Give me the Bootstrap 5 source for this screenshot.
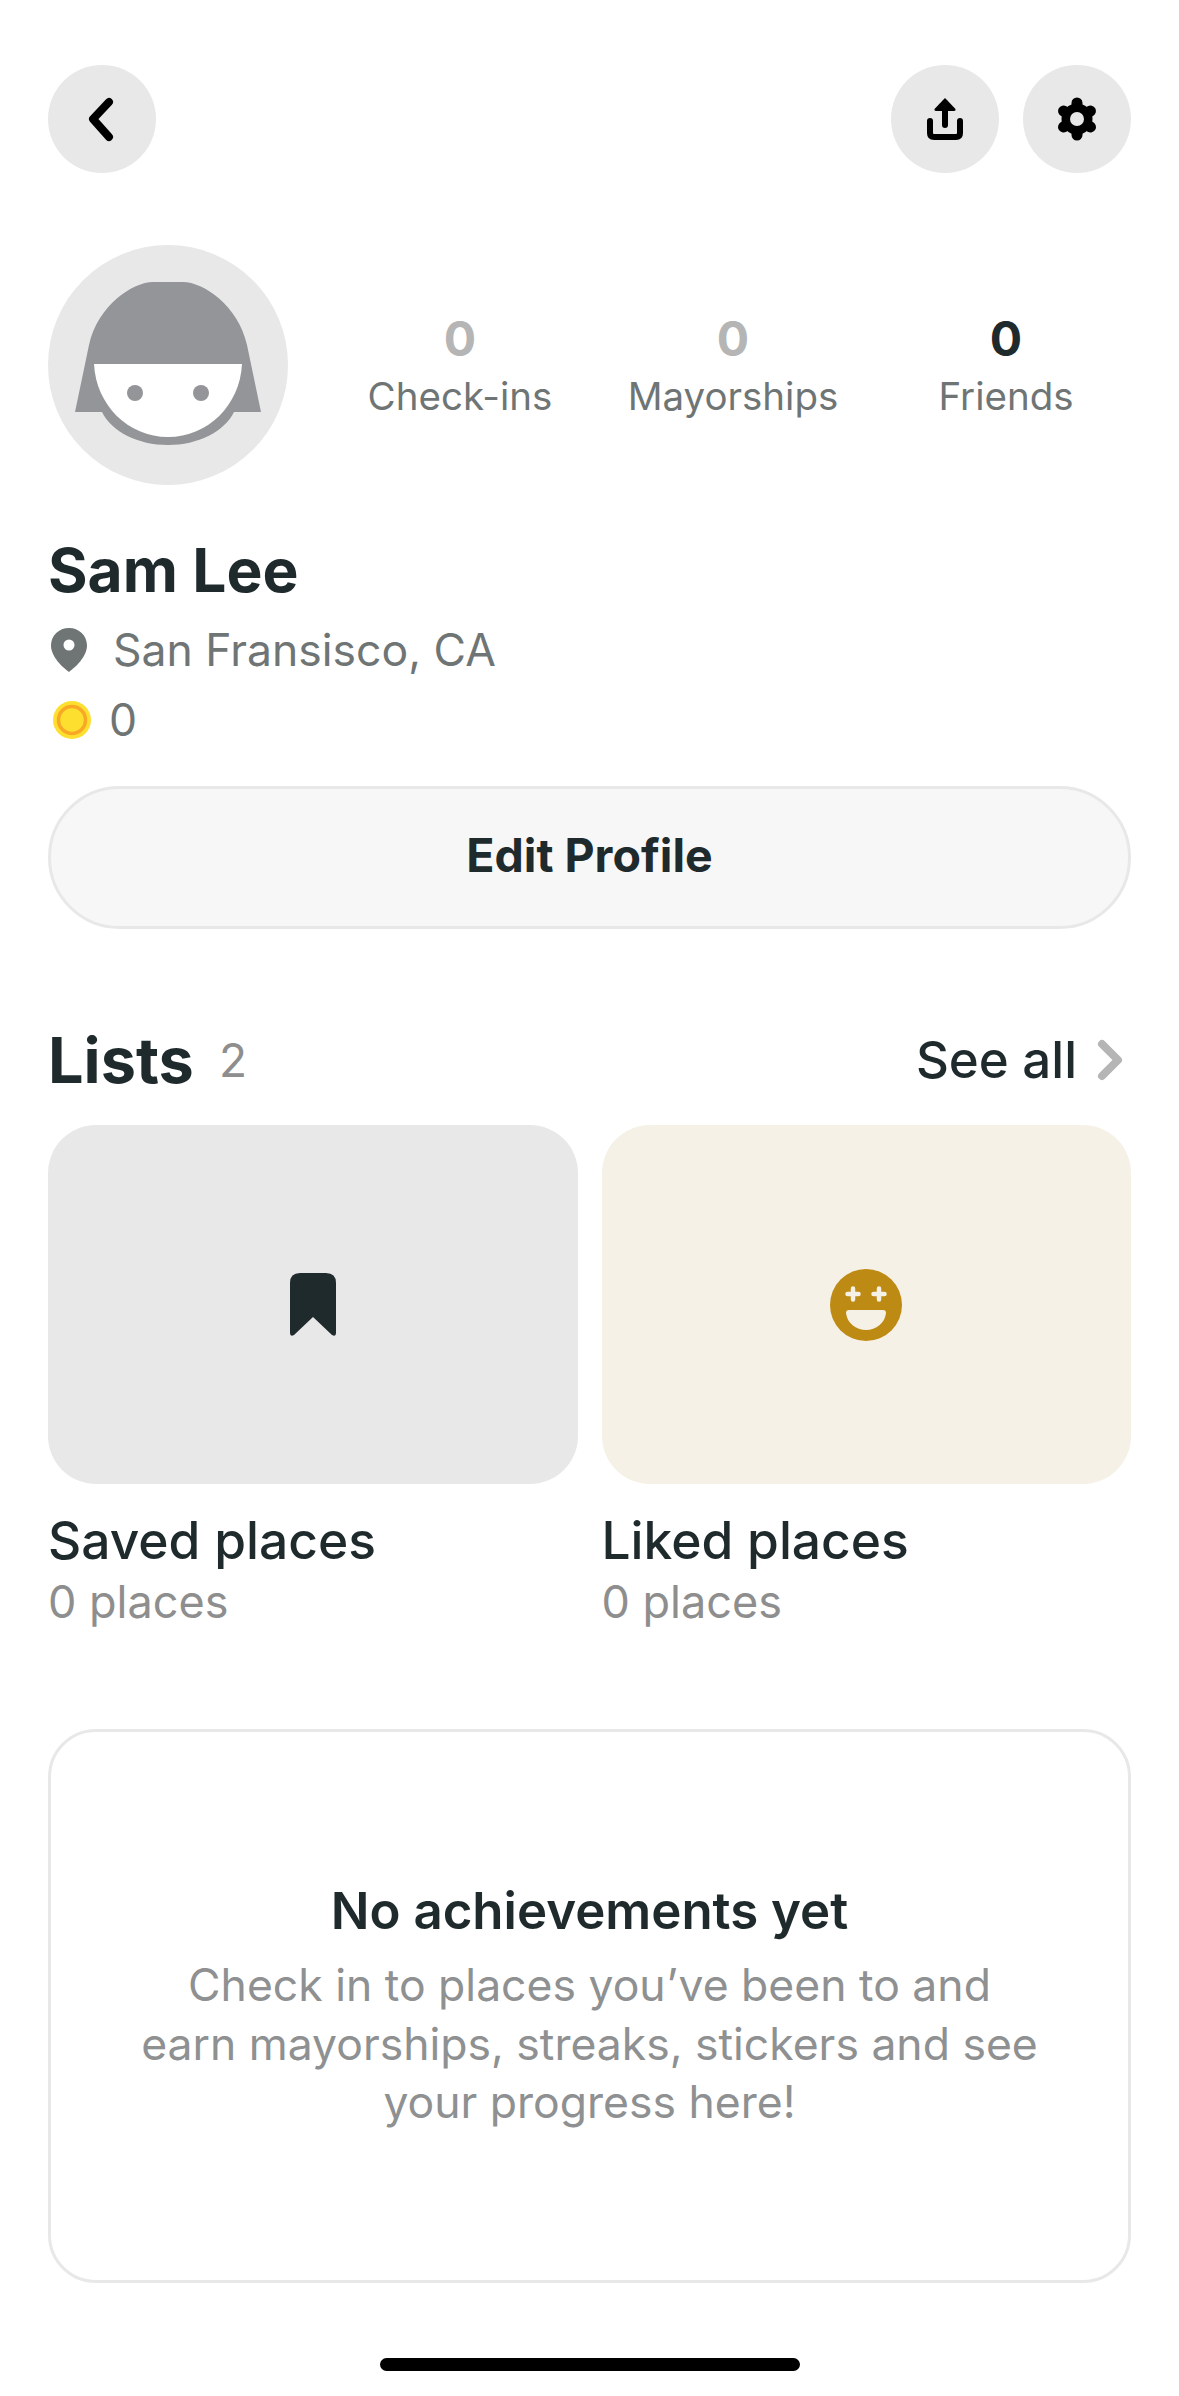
<!DOCTYPE html>
<html lang="en">
<head>
  <meta charset="UTF-8">
  <meta name="viewport" content="width=device-width, initial-scale=1">
  <title>Profile</title>
  <link href="https://cdn.jsdelivr.net/npm/bootstrap@5.3.0/dist/css/bootstrap.min.css" rel="stylesheet">
  <style>
    body {
      font-family: Inter, "Liberation Sans", sans-serif;
      background-color: #fff;
      color: #1f2a2c;
    }
    .screen {
      height: 2396px;
      overflow: hidden;
      padding: 65px 48px 0;
    }
    .circle-btn {
      width: 108px;
      height: 108px;
      padding: 0;
      border: 0;
      background-color: #e8e8e8;
    }
    .top-right { gap: 24px; }
    .profile-top { margin-top: 72px; }
    .avatar-pic { width: 240px; height: 240px; flex: none; }
    .stats-row { margin: 6px -11.5px 0 35.5px; }
    .stat-item { width: 273px; text-align: center; }
    .stat-num { font-size: 48px; font-weight: 700; line-height: 56px; color: #b5b5b5; }
    .stat-num.is-on { color: #1f2a2c; }
    .stat-label { font-size: 38.5px; line-height: 58px; color: #6f7575; }
    .user-name { font-size: 60.5px; font-weight: 700; line-height: 72px; margin: 49px 0 0; }
    .info-line { font-size: 44.5px; line-height: 70px; color: #6f7575; }
    .pin-line { margin-top: 9px; gap: 26px; padding-left: 3px; }
    .coin-line { margin-top: 0; gap: 18px; padding-left: 5px; }
    .edit-btn {
      display: block;
      width: 100%;
      height: 143px;
      margin-top: 31px;
      padding-bottom: 10px;
      border: 3px solid #e8e8e8;
      background-color: #f7f7f7;
      color: #1f2a2c;
      font-size: 46.5px;
      font-weight: 700;
    }
    .lists-head { margin-top: 96px; height: 70px; }
    .lists-title { font-size: 63px; font-weight: 700; }
    .lists-count { font-size: 46px; color: #8e8e8e; margin-left: 25px; }
    .see-all { font-size: 51px; font-weight: 500; color: #1f2a2c; gap: 20px; margin-right: 8px; }
    .lists-row { margin-top: 30px; --bs-gutter-x: 24px; }
    .list-tile { height: 359px; border-radius: 48px; }
    .tile-saved { background-color: #e8e8e8; }
    .tile-liked { background-color: #f6f1e6; }
    .list-name { font-size: 51.5px; font-weight: 500; line-height: 62px; margin-top: 25px; }
    .list-count { font-size: 45px; line-height: 62px; color: #8e8e8e; }
    .achieve-box {
      height: 554px;
      margin-top: 96px;
      border: 3px solid #e8e8e8;
      border-radius: 48px;
    }
    .achieve-title { font-size: 51px; font-weight: 600; line-height: 62px; margin: 0 0 14px; }
    .achieve-text { font-size: 44.5px; line-height: 58.5px; color: #8e9091; margin: 0; }
    .home-bar { width: 420px; height: 13px; background-color: #000; margin: 75px auto 0; }
  </style>
</head>
<body>
  <div class="screen">
    <div class="d-flex justify-content-between">
      <button class="btn circle-btn rounded-circle d-flex align-items-center justify-content-center" aria-label="Back">
        <svg width="108" height="108" viewBox="0 0 108 108"><path d="M61 37 L45 54 L61 72" fill="none" stroke="#000" stroke-width="8" stroke-linecap="round" stroke-linejoin="round"/></svg>
      </button>
      <div class="d-flex top-right">
        <button class="btn circle-btn rounded-circle d-flex align-items-center justify-content-center" aria-label="Share">
          <svg width="108" height="108" viewBox="0 0 108 108"><path d="M39 56 V68 Q39 72 43 72 H65 Q69 72 69 68 V56" fill="none" stroke="#000" stroke-width="6" stroke-linecap="round"/><path d="M54 60 V38" fill="none" stroke="#000" stroke-width="6" stroke-linecap="round"/><path d="M54 33 L64.500 44 Q65 46 63 46 H45 Q43 46 43.500 44 Z" fill="#000"/></svg>
        </button>
        <button class="btn circle-btn rounded-circle d-flex align-items-center justify-content-center" aria-label="Settings">
          <svg width="108" height="108" viewBox="0 0 108 108">
            <circle cx="54" cy="54" r="15.500" fill="#000"/>
            <path d="M54 54 V38 M54 54 V70 M54 54 L67.500 46 M54 54 L40.500 62 M54 54 L67.500 62 M54 54 L40.500 46" stroke="#000" stroke-width="11" stroke-linecap="round"/>
            <circle cx="54" cy="54" r="7" fill="#e8e8e8"/>
          </svg>
        </button>
      </div>
    </div>

    <div class="d-flex align-items-center profile-top">
      <svg class="avatar-pic" viewBox="0 0 240 240">
        <circle cx="120" cy="120" r="120" fill="#e8e8e8"/>
        <path d="M27 167 L41 100 C50 60 85 37 105 37 H135 C155 37 190 60 199 100 L213 167 H186 C176 187 150 200 120 200 C90 200 64 187 54 167 Z" fill="#939598"/>
        <path d="M46 119 H194 C192 160 160 192 120 192 C80 192 48 160 46 119 Z" fill="#fff"/>
        <circle cx="87" cy="148" r="8" fill="#939598"/>
        <circle cx="153" cy="148" r="8" fill="#939598"/>
      </svg>
      <div class="d-flex stats-row">
        <div class="stat-item"><div class="stat-num">0</div><div class="stat-label">Check-ins</div></div>
        <div class="stat-item"><div class="stat-num">0</div><div class="stat-label">Mayorships</div></div>
        <div class="stat-item"><div class="stat-num is-on">0</div><div class="stat-label">Friends</div></div>
      </div>
    </div>

    <h1 class="user-name">Sam Lee</h1>
    <div class="d-flex align-items-center info-line pin-line">
      <svg width="36" height="44" viewBox="0 0 36 44"><path fill-rule="evenodd" fill="#6f7575" d="M18 0 C28 0 36 7.500 36 17.500 C36 29 24 39.500 18 44 C12 39.500 0 29 0 17.500 C0 7.500 8 0 18 0 Z M18 11.500 A5.500 5.500 0 1 0 18 22.500 A5.500 5.500 0 1 0 18 11.500 Z"/></svg>
      <span>San Fransisco, CA</span>
    </div>
    <div class="d-flex align-items-center info-line coin-line">
      <svg width="38" height="38" viewBox="0 0 38 38"><circle cx="19" cy="19" r="19" fill="#fde02f"/><circle cx="19" cy="19" r="13.500" fill="#fde02f" stroke="#f9a825" stroke-width="3.500"/></svg>
      <span>0</span>
    </div>
    <button class="btn edit-btn rounded-pill">Edit Profile</button>

    <div class="d-flex justify-content-between align-items-center lists-head">
      <div class="d-flex align-items-center"><span class="lists-title">Lists</span><span class="lists-count">2</span></div>
      <a href="#" class="d-flex align-items-center text-decoration-none see-all">
        <span>See all</span>
        <svg width="26" height="42" viewBox="0 0 26 42"><path d="M5 5 L21 21 L5 37" fill="none" stroke="#b5b5b5" stroke-width="8" stroke-linecap="round" stroke-linejoin="round"/></svg>
      </a>
    </div>

    <div class="row lists-row">
      <div class="col-6">
        <div class="list-tile tile-saved d-flex align-items-center justify-content-center">
          <svg width="46" height="64" viewBox="0 0 46 64"><path d="M10 0 H36 Q46 0 46 10 V60 Q46 64 42 62 L23 44 L4 62 Q0 64 0 60 V10 Q0 0 10 0 Z" fill="#1f2a2c"/></svg>
        </div>
        <div class="list-name">Saved places</div>
        <div class="list-count">0 places</div>
      </div>
      <div class="col-6">
        <div class="list-tile tile-liked d-flex align-items-center justify-content-center">
          <svg width="72" height="72" viewBox="0 0 72 72">
            <circle cx="36" cy="36" r="36" fill="#bd8a14"/>
            <path d="M17.500 25 H28.500 M23 19.500 V30.500 M43.500 25 H54.500 M49 19.500 V30.500" stroke="#f6f1e6" stroke-width="4.500" stroke-linecap="round"/>
            <path d="M19 41 H53 Q56 41 56 44 C55 54 46 61 36 61 C26 61 17 54 16 44 Q16 41 19 41 Z" fill="#f6f1e6"/>
          </svg>
        </div>
        <div class="list-name">Liked places</div>
        <div class="list-count">0 places</div>
      </div>
    </div>

    <div class="achieve-box d-flex flex-column align-items-center justify-content-center text-center">
      <h2 class="achieve-title">No achievements yet</h2>
      <p class="achieve-text">Check in to places you’ve been to and<br>earn mayorships, streaks, stickers and see<br>your progress here!</p>
    </div>

    <div class="home-bar rounded-pill"></div>
  </div>
  <script src="https://cdn.jsdelivr.net/npm/bootstrap@5.3.0/dist/js/bootstrap.bundle.min.js"></script>
</body>
</html>
